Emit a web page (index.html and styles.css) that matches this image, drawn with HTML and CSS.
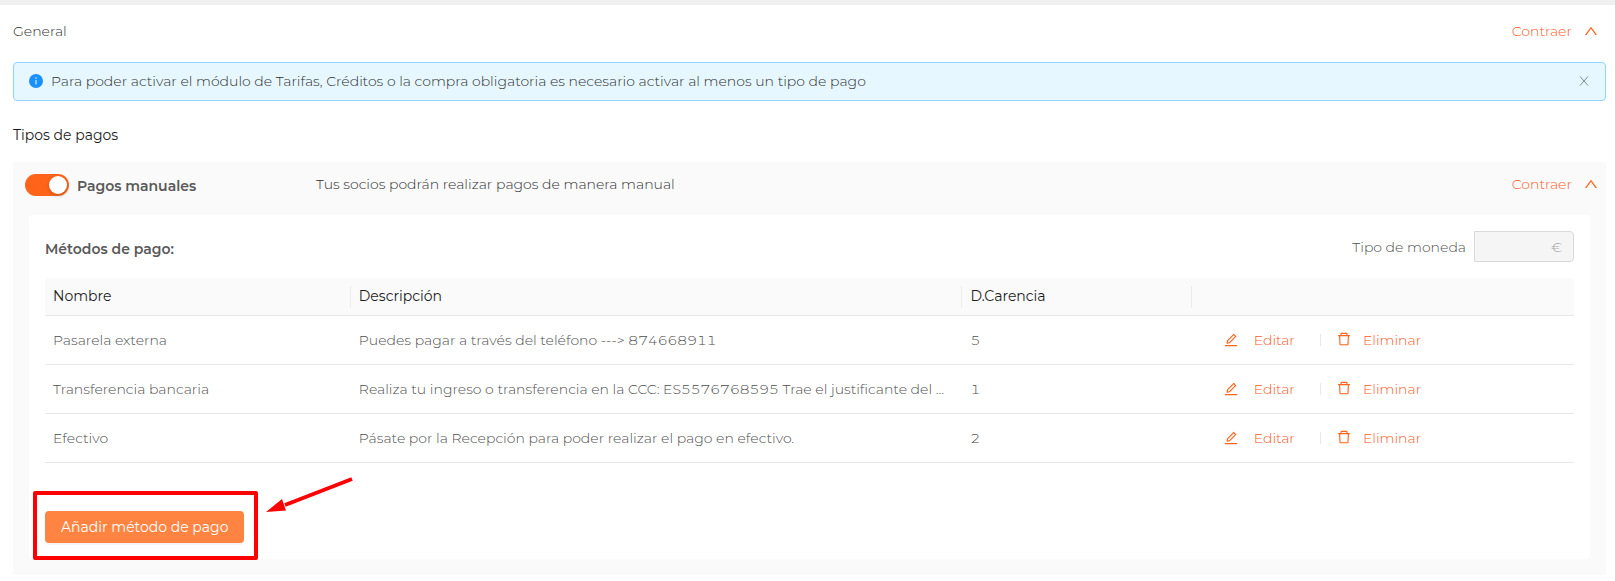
FILE: index.html
```html
<!DOCTYPE html>
<html lang="es">
<head>
<meta charset="utf-8">
<meta name="viewport" content="width=device-width, initial-scale=1">
<title>Tipos de pagos</title>
<link rel="stylesheet" href="styles.css">
</head>
<body>
  <!-- icons shared by the page -->
  <svg class="sprite" aria-hidden="true">
    <symbol id="icon-up" viewBox="0 0 1024 1024"><path d="M890.5 755.3L537.9 269.2c-12.8-17.6-39-17.6-51.7 0L133.5 755.3A8 8 0 00140 768h75c5.1 0 9.9-2.5 12.9-6.6L512 369.8l284.1 391.6c3 4.1 7.8 6.6 12.9 6.6h75c6.5 0 10.3-7.4 6.5-12.7z"/></symbol>
    <symbol id="icon-edit" viewBox="0 0 1024 1024"><path d="M257.7 752c2 0 4-.2 6-.5L431.9 722c2-.4 3.9-1.3 5.3-2.8l423.9-423.9a9.96 9.96 0 000-14.1L694.9 114.9c-1.9-1.9-4.4-2.9-7.1-2.9s-5.2 1-7.1 2.9L256.8 538.8c-1.5 1.5-2.4 3.3-2.8 5.3l-29.5 168.2a33.5 33.5 0 009.4 29.8c6.6 6.4 14.9 9.9 23.8 9.9zm67.4-174.4L687.8 215l73.3 73.3-362.7 362.6-88.9 15.7 15.6-89zM880 836H144c-17.7 0-32 14.3-32 32v36c0 4.4 3.6 8 8 8h784c4.4 0 8-3.6 8-8v-36c0-17.7-14.3-32-32-32z"/></symbol>
    <symbol id="icon-delete" viewBox="0 0 1024 1024"><path d="M360 184h-8c4.4 0 8-3.6 8-8v8h304v-8c0 4.4 3.6 8 8 8h-8v72h72v-80c0-35.3-28.7-64-64-64H352c-35.3 0-64 28.7-64 64v80h72v-72zm504 72H160c-17.7 0-32 14.3-32 32v32c0 4.4 3.6 8 8 8h60.4l24.7 523c1.6 34.1 29.8 61 63.9 61h454c34.2 0 62.3-26.8 63.9-61l24.7-523H888c4.4 0 8-3.6 8-8v-32c0-17.7-14.3-32-32-32zM731.3 840H292.7l-24.2-512h487l-24.2 512z"/></symbol>
  </svg>

  <main class="page">
    <div class="section-header">
      <span>General</span>
      <button type="button" class="toggle-btn">Contraer <svg class="icon-up"><use href="#icon-up"/></svg></button>
    </div>

    <div class="alert" role="alert">
      <svg class="alert-icon" viewBox="0 0 14 14"><circle cx="7" cy="7" r="7" fill="#1890ff"/><path d="M7 6v4.500" stroke="#fff" stroke-width="1"/><circle cx="7" cy="4" r=".7" fill="#fff"/></svg>
      <span class="alert-text">Para poder activar el módulo de Tarifas, Créditos o la compra obligatoria es necesario activar al menos un tipo de pago</span>
      <button type="button" class="alert-close" aria-label="Cerrar"><svg viewBox="0 0 10 10"><path d="M1 0.500l8 9M9 0.500l-8 9"/></svg></button>
    </div>

    <h2>Tipos de pagos</h2>

    <section class="panel">
      <div class="panel-header">
        <label class="switch-label">
          <input type="checkbox" class="switch" checked>
          <span>Pagos manuales</span>
        </label>
        <span class="panel-desc">Tus socios podrán realizar pagos de manera manual</span>
        <button type="button" class="toggle-btn">Contraer <svg class="icon-up"><use href="#icon-up"/></svg></button>
      </div>

      <div class="card">
        <div class="card-header">
          <h3>Métodos de pago:</h3>
          <div class="currency">
            <label for="currency">Tipo de moneda</label>
            <input type="text" id="currency" value="€" disabled>
          </div>
        </div>

        <table>
          <colgroup>
            <col class="col-name">
            <col class="col-desc">
            <col class="col-days">
            <col class="col-actions">
          </colgroup>
          <thead>
            <tr>
              <th><div>Nombre</div></th>
              <th><div>Descripción</div></th>
              <th><div>D.Carencia</div></th>
              <th></th>
            </tr>
          </thead>
          <tbody>
            <tr>
              <td>Pasarela externa</td>
              <td>Puedes pagar a través del teléfono ---&gt; 874668911</td>
              <td>5</td>
              <td>
                <div class="actions">
                  <button type="button" class="edit"><svg><use href="#icon-edit"/></svg>Editar</button>
                  <button type="button" class="delete"><svg><use href="#icon-delete"/></svg>Eliminar</button>
                </div>
              </td>
            </tr>
            <tr>
              <td>Transferencia bancaria</td>
              <td>Realiza tu ingreso o transferencia en la CCC: ES5576768595 Trae el justificante del ...</td>
              <td>1</td>
              <td>
                <div class="actions">
                  <button type="button" class="edit"><svg><use href="#icon-edit"/></svg>Editar</button>
                  <button type="button" class="delete"><svg><use href="#icon-delete"/></svg>Eliminar</button>
                </div>
              </td>
            </tr>
            <tr>
              <td>Efectivo</td>
              <td>Pásate por la Recepción para poder realizar el pago en efectivo.</td>
              <td>2</td>
              <td>
                <div class="actions">
                  <button type="button" class="edit"><svg><use href="#icon-edit"/></svg>Editar</button>
                  <button type="button" class="delete"><svg><use href="#icon-delete"/></svg>Eliminar</button>
                </div>
              </td>
            </tr>
          </tbody>
        </table>

        <div class="add-wrap">
          <button type="button" class="add-btn">Añadir método de pago</button>
          <!-- red frame and arrow pointing at the button -->
          <span class="highlight"></span>
          <svg class="arrow" viewBox="0 0 90 38"><path d="M86 3L19 29" stroke="#f00" stroke-width="4"/><path d="M0 36L16 23L20 34.500z" fill="#f00"/></svg>
        </div>
      </div>
    </section>
  </main>
</body>
</html>
```
FILE: styles.css
```css
* {
  margin: 0;
  padding: 0;
  box-sizing: border-box;
}

body {
  font-family: Montserrat, Inter, sans-serif;
  font-size: 14px;
  font-weight: 300;
  line-height: 22px;
  font-feature-settings: "tnum";
  color: #303030;
  background-color: #fff;
  border-top: 5px solid #f0f0f0;
}

button {
  font: inherit;
  color: #ff5a1f;
  background: none;
  border: 0;
  cursor: pointer;
}

.sprite {
  display: none;
}

.page {
  padding: 0 9px 6px 13px;
}

.section-header {
  display: flex;
  justify-content: space-between;
  align-items: center;
  height: 52px;
  padding-right: 7px;
}

.toggle-btn {
  display: flex;
  align-items: center;
  gap: 11px;
}

.icon-up {
  width: 16px;
  height: 16px;
  fill: #ff641a;
}

/* alert */
.alert {
  display: flex;
  align-items: center;
  margin-top: 5px;
  padding: 7px 16px 8px 15px;
  min-height: 39px;
  background-color: #e6f7ff;
  border: 1px solid #91d5ff;
  border-radius: 4px;
}

.alert-icon {
  width: 14px;
  height: 14px;
  margin-right: 8px;
  flex-shrink: 0;
}

.alert-text {
  flex-grow: 1;
}

.alert-close {
  display: flex;
}

.alert-close svg {
  width: 10px;
  height: 10px;
  stroke: #7f8b90;
  fill: none;
}

h2 {
  margin: 23px 0 16px;
  font-size: 14px;
  font-weight: 400;
  color: #1c1c1c;
}

/* payment type panel */
.panel {
  background-color: #fafafa;
  padding: 0 16px 16px;
}

.panel-header {
  display: flex;
  align-items: center;
  height: 53px;
  padding-bottom: 8px;
  margin: 0 -9px 0 -4px;
}

.switch-label {
  display: flex;
  align-items: center;
  gap: 8px;
  flex: 0 0 291px;
  font-weight: 600;
  color: #595959;
  cursor: pointer;
}

.switch-label span {
  padding-top: 2px;
}

.switch {
  appearance: none;
  display: flex;
  align-items: center;
  width: 44px;
  height: 22px;
  padding: 2px;
  border-radius: 11px;
  background-color: #bfbfbf;
}

.switch::before {
  content: "";
  width: 18px;
  height: 18px;
  border-radius: 50%;
  background-color: #fff;
  box-shadow: 0 2px 4px rgba(0, 35, 11, 0.2);
}

.switch:checked {
  justify-content: flex-end;
  background-color: #ff641a;
}

.panel-desc {
  flex-grow: 1;
}

.panel-desc,
.panel-header .toggle-btn {
  padding-bottom: 2px;
}

.card {
  background-color: #fff;
  border-radius: 4px;
  padding: 16px;
}

.card-header {
  display: flex;
  justify-content: space-between;
  align-items: center;
  margin-bottom: 16px;
}

h3 {
  padding-top: 4px;
  font-size: 14px;
  font-weight: 600;
  color: #595959;
}

.currency {
  display: flex;
  align-items: center;
  gap: 8px;
  color: #505050;
}

.currency input {
  width: 100px;
  height: 31px;
  padding: 0 11px;
  font: inherit;
  text-align: right;
  color: #a8a8a8;
  background-color: #f5f5f5;
  border: 1px solid #d9d9d9;
  border-radius: 0 4px 4px 0;
}

table {
  width: 100%;
  table-layout: fixed;
  border-collapse: separate;
  border-spacing: 0;
}

.col-name {
  width: 20%;
}
.col-desc {
  width: 40%;
}
.col-days {
  width: 15%;
}
.col-actions {
  width: 25%;
}

th {
  height: 38px;
  text-align: left;
  font-weight: 400;
  color: #1c1c1c;
  background-color: #fafafa;
  border-bottom: 1px solid #e8e8e8;
}

th:first-child {
  border-top-left-radius: 4px;
}
th:last-child {
  border-top-right-radius: 4px;
}

th div {
  padding-left: 8px;
  line-height: 20px;
  padding-bottom: 2px;
  border-right: 1px solid #ebebeb;
}

td {
  height: 49px;
  padding: 0 8px;
  color: #505050;
  border-bottom: 1px solid #e8e8e8;
  white-space: nowrap;
  overflow: hidden;
  text-overflow: ellipsis;
}

.actions {
  display: flex;
  align-items: center;
  padding-left: 23px;
}

.actions button {
  display: flex;
  align-items: center;
}

.actions svg {
  width: 16px;
  height: 16px;
  fill: #ff641a;
}

.edit {
  gap: 15px;
}

.delete {
  gap: 11px;
}

.actions .delete svg {
  margin-bottom: 2px;
}

/* thin line between the two actions */
.delete::before {
  content: "";
  width: 1px;
  height: 12px;
  margin: 0 4px 0 25px;
  background-color: #e8e8e8;
}

.add-wrap {
  position: relative;
  width: fit-content;
  margin-top: 48px;
}

.add-btn {
  display: block;
  height: 32px;
  padding: 0 16px;
  font-weight: 400;
  color: #fff;
  background-color: #ff8442;
  border-radius: 4px;
  box-shadow: 0 2px 0 rgba(0, 0, 0, 0.045);
}

.highlight {
  position: absolute;
  inset: -20px -14px -17px -12px;
  border: 4px solid #f00;
  border-radius: 2px;
  pointer-events: none;
}

.arrow {
  position: absolute;
  left: calc(100% + 22px);
  top: -35px;
  width: 90px;
  height: 38px;
  fill: none;
}
```
